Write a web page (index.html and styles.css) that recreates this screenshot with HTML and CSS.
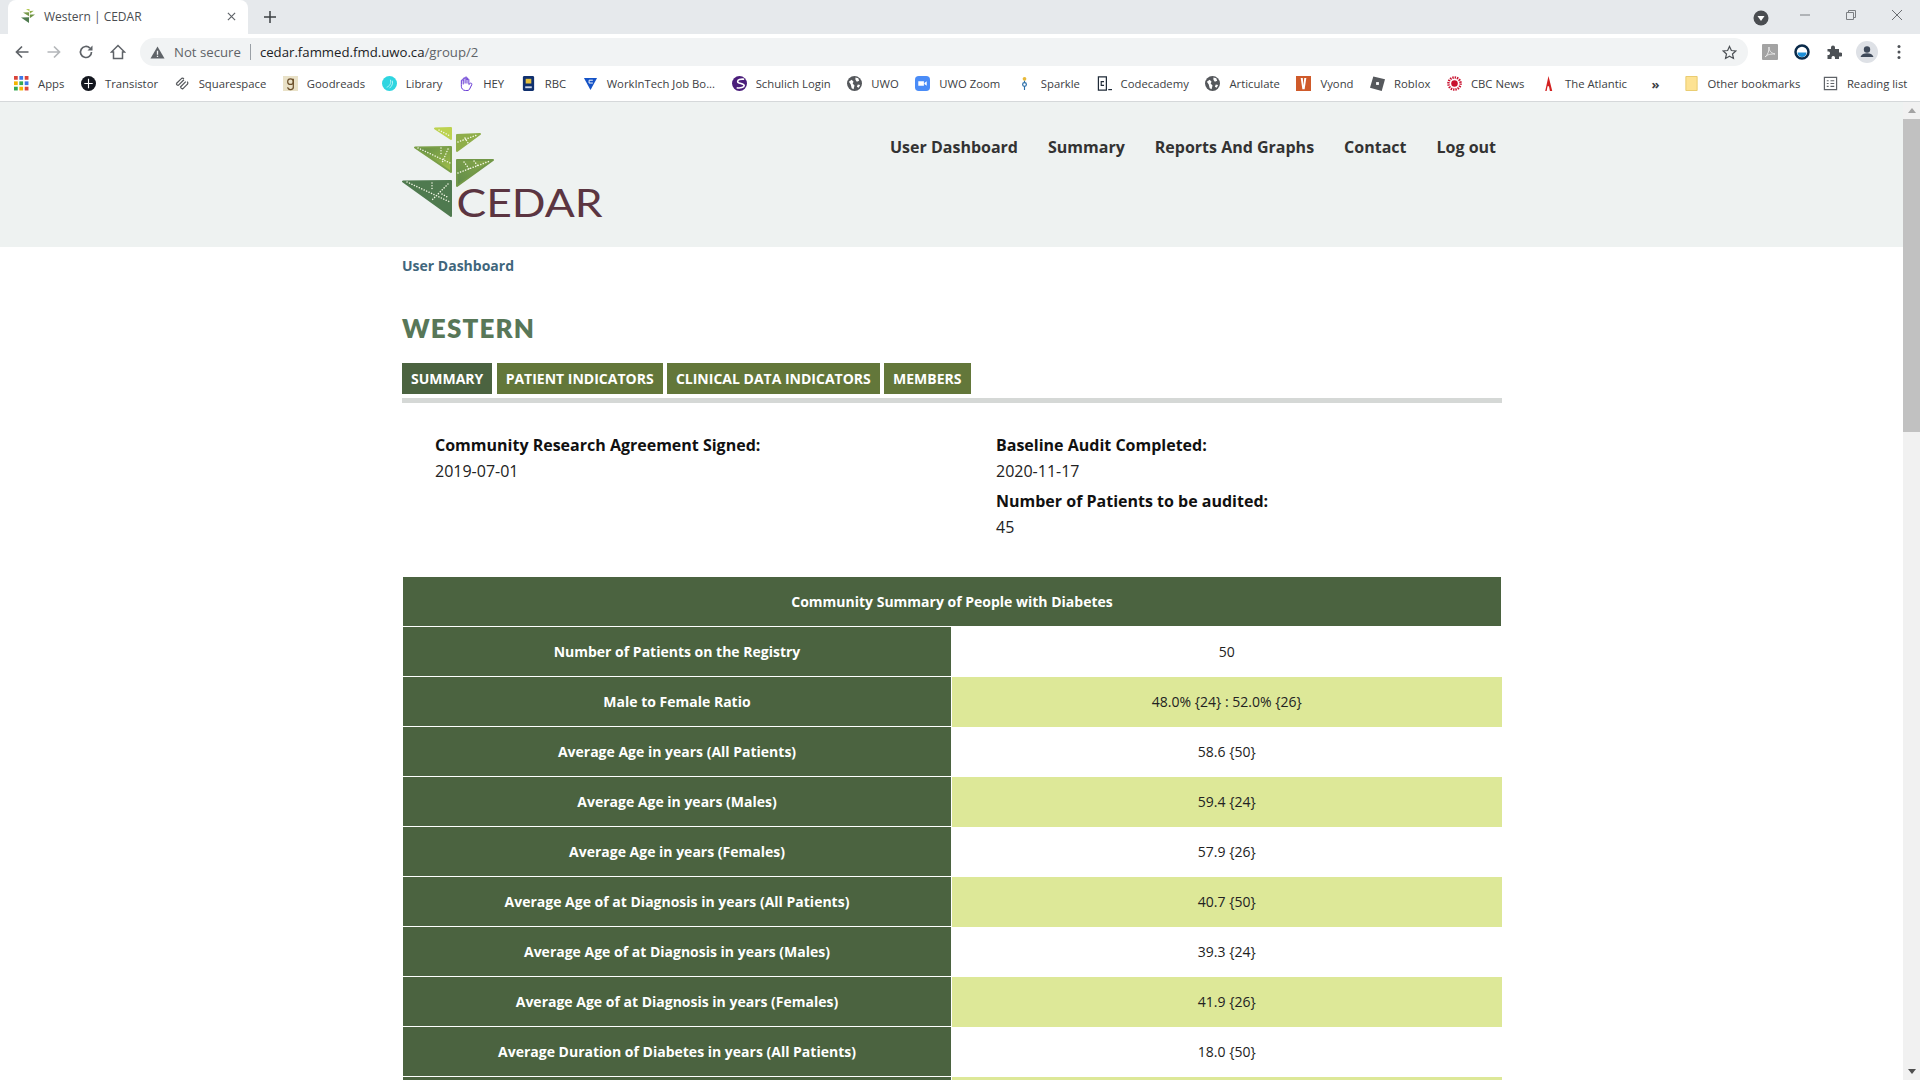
FILE: index.html
```html
<!DOCTYPE html>
<html lang="en">
<head>
  <meta charset="UTF-8">
  <meta name="viewport" content="width=device-width, initial-scale=1.0">
  <title>Western | CEDAR</title>
  <link rel="stylesheet" href="styles.css">
</head>
<body>
  <div class="tabstrip">
    <div class="tab">
      <svg class="tab-icon" viewBox="0 0 16 16"><path d="M6 1l3.500 0 0 2.500z" fill="#b5cb55"/><path d="M9.800 3l4-.2-4 3z" fill="#8fae4a"/><path d="M3 4.500l6-.3 0 4z" fill="#78994a"/><path d="M9.800 6.500l5.200 0-5.200 3.800z" fill="#6f9446"/><path d="M1 9.500l8-.2 0 5.700z" fill="#4f7a4f"/></svg>
      <span class="tab-title">Western | CEDAR</span>
      <svg class="tab-close" viewBox="0 0 10 10"><path d="M1 1l8 8M9 1l-8 8" stroke="#5f6368" stroke-width="1.300"/></svg>
    </div>
    <svg class="new-tab" viewBox="0 0 12 12"><path d="M6 0v12M0 6h12" stroke="#3c4043" stroke-width="1.500"/></svg>
    <div class="window-controls">
      <svg class="profile-down" viewBox="0 0 16 16"><circle cx="8" cy="8" r="7.500" fill="#4a4d51"/><path d="M4.500 6h7L8 11z" fill="#fff"/></svg>
      <svg class="win-btn" viewBox="0 0 12 12"><path d="M1 6h10" stroke="#7b7e82"/></svg>
      <svg class="win-btn" viewBox="0 0 12 12"><path d="M1.500 3.500h7v7h-7zM3.500 3.500v-2h7v7h-2" fill="none" stroke="#7b7e82"/></svg>
      <svg class="win-btn" viewBox="0 0 12 12"><path d="M1 1l10 10M11 1L1 11" stroke="#6b6e72"/></svg>
    </div>
  </div>

  <div class="toolbar">
    <svg class="nav-btn" viewBox="0 0 16 16"><path d="M14.500 8H2.500M8 2.500L2.500 8 8 13.500" fill="none" stroke="#5f6368" stroke-width="1.700"/></svg>
    <svg class="nav-btn" viewBox="0 0 16 16"><path d="M1.500 8h12M8 2.500L13.500 8 8 13.500" fill="none" stroke="#b4b7ba" stroke-width="1.700"/></svg>
    <svg class="nav-btn" viewBox="0 0 16 16"><path d="M13.500 8a5.500 5.500 0 1 1-1.600-3.900" fill="none" stroke="#5f6368" stroke-width="1.700"/><path d="M14.500 1.500v5h-5z" fill="#5f6368"/></svg>
    <svg class="nav-btn" viewBox="0 0 16 16"><path d="M8 1.500L1.500 8h2v6.500h9V8h2z" fill="none" stroke="#5f6368" stroke-width="1.500"/></svg>
    <div class="omnibox">
      <svg class="warn-icon" viewBox="0 0 16 16"><path d="M8 1.500L15.500 14.500H.5z" fill="#5f6368"/><path d="M7.300 6h1.400v4.500H7.300zM7.300 11.400h1.400v1.400H7.300z" fill="#f1f3f4"/></svg>
      <span class="not-secure">Not secure</span>
      <span class="omni-divider"></span>
      <span class="url">cedar.fammed.fmd.uwo.ca<span class="url-path">/group/2</span></span>
      <svg class="star" viewBox="0 0 16 16"><path d="M8 1.500l2 4.400 4.700.5-3.500 3.200 1 4.700L8 11.900l-4.200 2.400 1-4.700L1.300 6.400 6 5.900z" fill="none" stroke="#4d5156" stroke-width="1.300"/></svg>
    </div>
    <div class="ext-icons">
      <svg class="ext" viewBox="0 0 16 16"><rect width="16" height="16" rx="1" fill="#a3a3a3"/><path d="M3 13c3-2 4-6 4-10 0 4 2 6 6 7-4 0-7 0-10 3z" fill="none" stroke="#e8e8e8"/></svg>
      <svg class="ext" viewBox="0 0 16 16"><circle cx="8" cy="8" r="6.500" fill="#fff" stroke="#0b2b4a" stroke-width="2.500"/><path d="M3.500 8.500h9a4.500 4.500 0 0 1-9 0z" fill="#1c8fd8"/></svg>
      <svg class="ext" viewBox="0 0 16 16"><path d="M1.500 5H5V3.500a2 2 0 0 1 4 0V5h4v3.500h1.500a2 2 0 0 1 0 4H13V15H9v-1.500a1.800 1.800 0 0 0-3.500 0V15h-4v-4H3a2 2 0 0 0 0-3.500H1.500z" fill="#4d5156"/></svg>
      <svg class="avatar" viewBox="0 0 22 22"><circle cx="11" cy="11" r="11" fill="#dee1e6"/><circle cx="11" cy="8.500" r="3.200" fill="#3f4a5a"/><path d="M4.500 16c1-3 3.500-3.800 6.500-3.800s5.500.8 6.500 3.800z" fill="#3f4a5a"/></svg>
      <svg class="dots" viewBox="0 0 4 16"><circle cx="2" cy="2.500" r="1.500" fill="#4d5156"/><circle cx="2" cy="8" r="1.500" fill="#4d5156"/><circle cx="2" cy="13.500" r="1.500" fill="#4d5156"/></svg>
    </div>
  </div>

  <div class="bookmarks">
    <a class="bm"><svg viewBox="0 0 14 14"><g><rect x="0" y="0" width="3.500" height="3.500" fill="#d9443a"/><rect x="5" y="0" width="3.500" height="3.500" fill="#3b78e7"/><rect x="10" y="0" width="3.500" height="3.500" fill="#d9443a"/><rect x="0" y="5" width="3.500" height="3.500" fill="#f4b400"/><rect x="5" y="5" width="3.500" height="3.500" fill="#34a853"/><rect x="10" y="5" width="3.500" height="3.500" fill="#3b78e7"/><rect x="0" y="10" width="3.500" height="3.500" fill="#34a853"/><rect x="5" y="10" width="3.500" height="3.500" fill="#f4b400"/><rect x="10" y="10" width="3.500" height="3.500" fill="#d9443a"/></g></svg>Apps</a>
    <a class="bm"><svg viewBox="0 0 16 16"><circle cx="8" cy="8" r="8" fill="#14171f"/><path d="M8 3v10M3.500 8h9" stroke="#fff" stroke-width="1.200"/></svg>Transistor</a>
    <a class="bm"><svg viewBox="0 0 16 16"><path d="M1.500 8l5-5a2 2 0 0 1 3 0M3.500 10l6-6M5.500 12l6-6M8 14l5-5a2 2 0 0 0 0-3M3.500 10a2 2 0 0 1-2-2M5.500 12l2.500 2" fill="none" stroke="#55585c" stroke-width="1.300"/></svg>Squarespace</a>
    <a class="bm"><svg viewBox="0 0 16 16"><rect width="16" height="16" fill="#e9e1c7"/><circle cx="8" cy="6" r="3" fill="none" stroke="#6b4f2a" stroke-width="1.300"/><path d="M11 3v8a3 3 0 0 1-6 1" fill="none" stroke="#6b4f2a" stroke-width="1.300"/></svg>Goodreads</a>
    <a class="bm"><svg viewBox="0 0 16 16"><circle cx="8" cy="8" r="8" fill="#2fd5e0"/><path d="M5 12c3-1 5-4 4-8M8 13c2-2 4-4 3-8" fill="none" stroke="#b9f4f7"/></svg>Library</a>
    <a class="bm"><svg viewBox="0 0 16 16"><path d="M2.500 9V5a1 1 0 0 1 2 0V3a1 1 0 0 1 2 0V2a1 1 0 0 1 2 0v2a1 1 0 0 1 2 0v5l2-1.500c1 0 1.500 1 1 2L11 14.500a3 3 0 0 1-2.500 1H7C4 15.500 2.500 13 2.500 11zM4.500 5v4M6.500 3v5M8.500 2v6" fill="none" stroke="#5b2bd0" stroke-width="1"/></svg>HEY</a>
    <a class="bm"><svg viewBox="0 0 14 16"><rect x="1" width="12" height="16" rx="1.500" fill="#10306e"/><path d="M4 3h6v5H4z" fill="#e7c13d"/><path d="M3.500 11h7v2h-7z" fill="#cfd8ea"/></svg>RBC</a>
    <a class="bm"><svg viewBox="0 0 16 16"><path d="M1 2h14L8 15z" fill="#1553c7"/><path d="M10.500 4.500h-4v3h4" fill="none" stroke="#fff"/></svg>WorkInTech Job Bo...</a>
    <a class="bm"><svg viewBox="0 0 16 16"><circle cx="8" cy="8" r="8" fill="#4a1d7a"/><path d="M13 3.500C9 3 6 4 6 6s7 2 7 4-4 3.500-8 2.500" fill="none" stroke="#fff" stroke-width="1.700"/></svg>Schulich Login</a>
    <a class="bm"><svg viewBox="0 0 16 16"><circle cx="8" cy="8" r="8" fill="#55585c"/><path d="M2 6l3-2 2 2-1 2 2 2-1 4-2-1-1-4zM9 1.500l3 .8 1 2.700-2.500 1-1.500-2zM11.500 9l2.500.5-1.500 3-2-1z" fill="#fff"/></svg>UWO</a>
    <a class="bm"><svg viewBox="0 0 16 16"><rect width="16" height="16" rx="4" fill="#4a8cf7"/><path d="M3.500 5.500h6v5h-6zM10 7.500l2.500-2v5l-2.500-2z" fill="#fff"/></svg>UWO Zoom</a>
    <a class="bm"><svg viewBox="0 0 16 16"><circle cx="8" cy="3" r="2" fill="#e8b93a"/><circle cx="8" cy="9" r="2" fill="none" stroke="#2b6ea8" stroke-width="1.300"/><path d="M8 5v2M8 11v4" stroke="#2b6ea8" stroke-width="1.200"/></svg>Sparkle</a>
    <a class="bm"><svg viewBox="0 0 16 16"><path d="M1.500 1h8.500v14H1.500z" fill="none" stroke="#1f2a37" stroke-width="1.300"/><path d="M7.500 6H4.500v4h3" fill="none" stroke="#1f2a37" stroke-width="1.200"/><path d="M12 14.500h4" stroke="#1f2a37" stroke-width="1.300"/></svg>Codecademy</a>
    <a class="bm"><svg viewBox="0 0 16 16"><circle cx="8" cy="8" r="8" fill="#55585c"/><path d="M2 6l3-2 2 2-1 2 2 2-1 4-2-1-1-4zM9 1.500l3 .8 1 2.700-2.500 1-1.500-2zM11.500 9l2.500.5-1.500 3-2-1z" fill="#fff"/></svg>Articulate</a>
    <a class="bm"><svg viewBox="0 0 16 16"><rect width="16" height="16" fill="#cf5a2a"/><path d="M5 2h2.200L8 10l.8-8H11l-1.800 12H6.800z" fill="#fff"/></svg>Vyond</a>
    <a class="bm"><svg viewBox="0 0 16 16"><path d="M3.500 0.500L16 3.500 12.500 16 0 12.500z" fill="#55585c"/><rect x="6.500" y="6.500" width="3" height="3" fill="#fff"/></svg>Roblox</a>
    <a class="bm"><svg viewBox="0 0 16 16"><circle cx="8" cy="8" r="3.500" fill="#c8102e"/><circle cx="8" cy="8" r="6.500" fill="none" stroke="#c8102e" stroke-width="2.600" stroke-dasharray="1.500 1"/></svg>CBC News</a>
    <a class="bm"><svg viewBox="0 0 16 16"><path d="M8 0l4 16H9.500L8.500 11H7l-1 5H4.500z" fill="#d32020"/></svg>The Atlantic</a>
    <span class="bm-more">»</span>
    <span class="bm-divider"></span>
    <a class="bm"><svg viewBox="0 0 14 16"><path d="M1 .5h12v15H1z" fill="#fde293" stroke="#e8c96a"/></svg>Other bookmarks</a>
    <span class="bm-divider"></span>
    <a class="bm"><svg viewBox="0 0 16 16"><path d="M1.500 1.500h13v13h-13z" fill="none" stroke="#5f6368" stroke-width="1.300"/><path d="M4 5h2M8 5h4M4 8h2M8 8h4M4 11h2M8 11h4" stroke="#5f6368" stroke-width="1.200"/></svg>Reading list</a>
  </div>

  <div class="viewport">
    <div class="page">
      <header class="site-header">
        <div class="container header-inner">
          <svg class="logo" viewBox="22 15 205 105" role="img" aria-label="CEDAR">
            <defs>
              <linearGradient id="leaf-a" x1="0" y1="0" x2="1" y2="1"><stop offset="0" stop-color="#5f8a45"/><stop offset="1" stop-color="#a2bf4a"/></linearGradient>
              <linearGradient id="leaf-b" x1="0" y1="1" x2="1" y2="0"><stop offset="0" stop-color="#5d8a4a"/><stop offset="1" stop-color="#8cab4a"/></linearGradient>
            </defs>
            <g stroke-width="2" stroke-linejoin="round">
              <path d="M55 18.500L71 18 71 29z" fill="#bcd24f" stroke="#bcd24f"/>
              <path d="M77 25L100 24 77 41z" fill="#8fae4a" stroke="#8fae4a"/>
              <path d="M35 37.500L71 37 71 62z" fill="url(#leaf-a)" stroke="#7a9f48"/>
              <path d="M77 50L113 50 77 76z" fill="url(#leaf-b)" stroke="#729848"/>
              <path d="M23 71.500L71 71 71 106z" fill="#4f7a4f" stroke="#4f7a4f"/>
            </g>
            <g fill="none" stroke="#f2f6e4" stroke-width="1.500" stroke-linecap="round" stroke-dasharray="0.100 2.600">
              <path d="M38 38L70 53M61 38L61 46M68 39L62 53"/>
              <path d="M78 63L110 51M84 52L90 60M94 51L98 56"/>
              <path d="M27 72L70 92M52 73L52 80M68 74L52 90M62 84L69 88"/>
              <path d="M78 32L97 25M85 28L88 33"/>
              <path d="M59 20L70 26"/>
            </g>
            <text class="logo-text" x="76.500" y="107" textLength="146" lengthAdjust="spacingAndGlyphs">CEDAR</text>
          </svg>
          <nav class="main-nav">
            <a>User Dashboard</a>
            <a>Summary</a>
            <a>Reports And Graphs</a>
            <a>Contact</a>
            <a>Log out</a>
          </nav>
        </div>
      </header>

      <main class="container">
        <div class="breadcrumb">User Dashboard</div>
        <h1>WESTERN</h1>
        <div class="tabs">
          <a class="tab-link active">SUMMARY</a>
          <a class="tab-link">PATIENT INDICATORS</a>
          <a class="tab-link">CLINICAL DATA INDICATORS</a>
          <a class="tab-link">MEMBERS</a>
        </div>

        <div class="info">
          <div>
            <h4>Community Research Agreement Signed:</h4>
            <p>2019-07-01</p>
          </div>
          <div>
            <h4>Baseline Audit Completed:</h4>
            <p>2020-11-17</p>
            <h4>Number of Patients to be audited:</h4>
            <p>45</p>
          </div>
        </div>

        <table class="summary">
          <colgroup><col class="col-label"><col></colgroup>
          <tr><th colspan="2">Community Summary of People with Diabetes</th></tr>
          <tr><th>Number of Patients on the Registry</th><td>50</td></tr>
          <tr><th>Male to Female Ratio</th><td>48.0% {24} : 52.0% {26}</td></tr>
          <tr><th>Average Age in years (All Patients)</th><td>58.6 {50}</td></tr>
          <tr><th>Average Age in years (Males)</th><td>59.4 {24}</td></tr>
          <tr><th>Average Age in years (Females)</th><td>57.9 {26}</td></tr>
          <tr><th>Average Age of at Diagnosis in years (All Patients)</th><td>40.7 {50}</td></tr>
          <tr><th>Average Age of at Diagnosis in years (Males)</th><td>39.3 {24}</td></tr>
          <tr><th>Average Age of at Diagnosis in years (Females)</th><td>41.9 {26}</td></tr>
          <tr><th>Average Duration of Diabetes in years (All Patients)</th><td>18.0 {50}</td></tr>
          <tr><th></th><td></td></tr>
        </table>
      </main>
    </div>

    <div class="scrollbar">
      <div class="scroll-arrow"><span class="arrow-up"></span></div>
      <div class="scroll-thumb"></div>
      <div class="scroll-rest"></div>
      <div class="scroll-arrow"><span class="arrow-down"></span></div>
    </div>
  </div>
</body>
</html>
```

FILE: styles.css
```css
* {
  box-sizing: border-box;
}
html, body {
  height: 100%;
}
body {
  margin: 0;
  display: flex;
  flex-direction: column;
  overflow: hidden;
  font-family: "Open Sans", Arial, sans-serif;
  background-color: white;
  color: #222;
}

/* browser chrome */
.tabstrip {
  height: 34px;
  flex: none;
  display: flex;
  align-items: flex-end;
  background-color: #e6e9ec;
}
.tab {
  width: 240px;
  height: 34px;
  margin-left: 8px;
  padding: 0 12px 2px;
  display: flex;
  align-items: center;
  background-color: white;
  border-radius: 8px 8px 0 0;
}
.tab-icon {
  width: 16px;
  height: 16px;
  margin-right: 8px;
}
.tab-title {
  flex: 1;
  font-size: 12px;
  color: #4a4d51;
}
.tab-close {
  width: 9px;
  height: 9px;
}
.new-tab {
  width: 12px;
  height: 12px;
  margin: 0 0 11px 16px;
}
.window-controls {
  margin-left: auto;
  height: 34px;
  display: flex;
  align-items: center;
  padding-right: 17px;
}
.profile-down {
  width: 16px;
  height: 16px;
  margin: 2px 30px 0 0;
}
.win-btn {
  width: 12px;
  height: 12px;
  margin: 0 0 4px 34px;
}
.profile-down + .win-btn {
  margin-left: 0;
}

.toolbar {
  height: 32px;
  flex: none;
  display: flex;
  align-items: center;
  background-color: white;
  padding: 4px 0 0 14px;
}
.nav-btn {
  width: 16px;
  height: 16px;
  margin-right: 16px;
}
.omnibox {
  width: 1608px;
  height: 28px;
  margin-left: -2px;
  padding: 0 11px 0 10px;
  display: flex;
  align-items: center;
  background-color: #f1f3f4;
  border-radius: 14px;
  font-size: 13.2px;
}
.warn-icon {
  width: 15px;
  height: 15px;
  margin-right: 9px;
}
.not-secure {
  color: #5f6368;
}
.omni-divider {
  width: 1px;
  height: 16px;
  margin: 0 9px;
  background-color: #9aa0a6;
}
.url {
  flex: 1;
  color: #202124;
}
.url-path {
  color: #5f6368;
}
.star {
  width: 15px;
  height: 15px;
}
.ext-icons {
  display: flex;
  align-items: center;
  margin-left: 14px;
}
.ext {
  width: 16px;
  height: 16px;
  margin-right: 16px;
}
.avatar {
  width: 22px;
  height: 22px;
  margin-left: -2px;
}
.dots {
  width: 4px;
  height: 16px;
  margin-left: 19px;
}

.bookmarks {
  height: 36px;
  flex: none;
  display: flex;
  align-items: center;
  padding-left: 14px;
  background-color: white;
  border-bottom: 1px solid #d5d8da;
  font-size: 11.3px;
  color: #3c4043;
}
.bm {
  display: flex;
  align-items: center;
  margin-right: 16.6px;
  white-space: nowrap;
}
.bm svg {
  width: 15px;
  height: 15px;
  margin-right: 9px;
  flex: none;
}
.bm-more {
  margin: 0 18px 0 8px;
  font-size: 13px;
  font-weight: bold;
}
.bm-divider {
  width: 1px;
  height: 16px;
  margin: 0 12px 0 -6px;
  background-color: #c8cbce;
}

/* page */
.viewport {
  flex: 1;
  display: flex;
  min-height: 0;
}
.page {
  flex: 1;
  overflow: hidden;
}
.container {
  width: 1100px;
  margin-left: 402px;
}
.site-header {
  height: 145px;
  background-color: #eef2f1;
}
.header-inner {
  display: flex;
  justify-content: space-between;
  padding-right: 6px;
}
.logo {
  width: 205px;
  height: 105px;
  margin-top: 23px;
}
.logo-text {
  font-family: Lato, "Open Sans", sans-serif;
  font-size: 38px;
  fill: #5b3541;
}
.main-nav {
  display: flex;
  gap: 30px;
  padding-top: 34px;
  font-size: 16px;
  line-height: 22px;
  font-weight: 700;
  color: #333;
}
.breadcrumb {
  margin-top: 9px;
  font-size: 14px;
  line-height: 20px;
  font-weight: 700;
  color: #3f667c;
}
h1 {
  margin: 35px 0 0;
  font-family: Lato, "Open Sans", sans-serif;
  font-size: 26px;
  line-height: 34px;
  font-weight: 800;
  letter-spacing: 1.15px;
  color: #587758;
}
.tabs {
  display: flex;
  gap: 4.3px;
  margin-top: 18px;
  padding-bottom: 4px;
  border-bottom: 5px solid #d5d8d6;
}
.tab-link {
  height: 31px;
  padding: 0 9px;
  display: flex;
  align-items: center;
  background-color: #63773a;
  color: white;
  font-size: 14px;
  font-weight: 700;
}
.tab-link.active {
  background-color: #4b6340;
}
.info {
  display: grid;
  grid-template-columns: 561px 1fr;
  padding: 31px 0 0 33px;
}
.info h4 {
  margin: 0;
  font-size: 16px;
  line-height: 22px;
  font-weight: 700;
  color: #111;
}
.info p {
  margin: 4px 0 8px;
  font-size: 16px;
  line-height: 22px;
  color: #222;
}
.summary {
  width: 100%;
  margin-top: 30px;
  border-collapse: collapse;
  table-layout: fixed;
  font-size: 14px;
}
.col-label {
  width: 549px;
}
.summary tr {
  height: 50px;
}
.summary th, .summary td {
  text-align: center;
  padding: 0 8px;
}
.summary th {
  border: 1px solid white;
  background-color: #4b6340;
  color: white;
  font-weight: 700;
}
.summary td {
  color: #222;
}
.summary tr:nth-child(odd) td {
  background-color: #dde898;
}

/* scrollbar */
.scrollbar {
  width: 17px;
  flex: none;
  display: flex;
  flex-direction: column;
  background-color: #f1f1f1;
}
.scroll-arrow {
  height: 17px;
  display: flex;
  align-items: center;
  justify-content: center;
}
.arrow-up, .arrow-down {
  width: 0;
  height: 0;
  border-left: 4px solid transparent;
  border-right: 4px solid transparent;
}
.arrow-up {
  border-bottom: 5px solid #a3a3a3;
}
.arrow-down {
  border-top: 5px solid #505050;
}
.scroll-thumb {
  height: 313px;
  background-color: #c1c1c1;
}
.scroll-rest {
  flex: 1;
}
```
